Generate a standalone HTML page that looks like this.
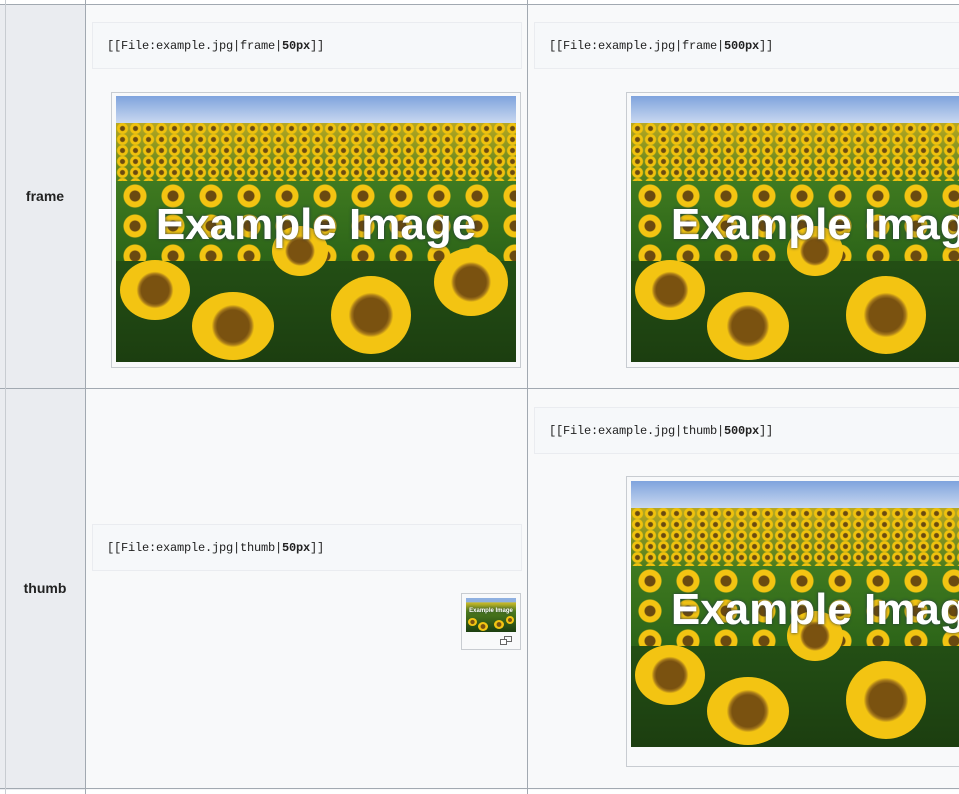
<!DOCTYPE html>
<html><head><meta charset="utf-8"><style>
body{margin:0;width:959px;height:794px;overflow:hidden;background:#fff;font-family:"Liberation Sans",sans-serif;position:relative}
.a{position:absolute}
.code{position:absolute;background:#f6f8fa;border:1px solid #eaecf0;box-sizing:border-box;font-family:"Liberation Mono","Noto Serif CJK SC",monospace;font-size:12px;color:#222;padding-left:14px;line-height:46px;letter-spacing:-0.2px}
.fr{position:absolute;background:#f8f9fa;border:1px solid #c8ccd1;box-sizing:border-box;overflow:hidden}
.img{position:absolute;overflow:hidden;background:linear-gradient(to bottom,#2f6a1c,#1c3e10)}
.sky{position:absolute;left:0;right:0;top:0;height:10%;background:linear-gradient(to bottom,#7fa3dd,#c9d8f0)}
.f1{position:absolute;left:0;right:0;top:10%;height:22%;background:
radial-gradient(circle,#6a4a10 0 2px,#f0c20e 3px 5px,transparent 6px) 0 0/13px 11px,
linear-gradient(#b8a822,#4e7d1e)}
.f2{position:absolute;left:0;right:0;top:32%;height:30%;background:
radial-gradient(circle,#6a4a10 0 5px,#f3c412 6px 11px,transparent 12px) 0 0/38px 30px,
linear-gradient(#3f7a20,#2c6418)}
.big{position:absolute;border-radius:50%;background:radial-gradient(circle,#7a5210 0 30%,#a5781a 35%,#f3c412 40% 100%)}
.img span{position:absolute;left:0;right:0;text-align:center;color:#fff;font-weight:bold;text-shadow:0 0 3px #234}
.th{font-weight:bold;font-size:14px;color:#222;text-align:center}
</style></head><body>
<div class="a" style="left:0;top:4px;width:959px;height:786px;background:#f8f9fa"></div>
<div class="a" style="left:0;top:4px;width:85px;height:786px;background:#eaecf0"></div>
<div class="a" style="left:0;top:4px;width:959px;height:1px;background:#a2a9b1"></div>
<div class="a" style="left:0;top:388px;width:959px;height:1px;background:#a2a9b1"></div>
<div class="a" style="left:0;top:788px;width:959px;height:1px;background:#a2a9b1"></div>
<div class="a" style="left:85px;top:0;width:1px;height:794px;background:#a2a9b1"></div>
<div class="a" style="left:527px;top:0;width:1px;height:794px;background:#a2a9b1"></div>
<div class="a" style="left:5px;top:0;width:1px;height:794px;background:#c8ccd1"></div>
<div class="a th" style="left:0;top:188px;width:90px">frame</div>
<div class="a th" style="left:0;top:580px;width:90px">thumb</div>

<div class="code" style="left:92px;top:22px;width:430px;height:47px">[[File:example.jpg|frame|<b>50px</b>]]</div>
<div class="code" style="left:534px;top:22px;width:440px;height:47px">[[File:example.jpg|frame|<b>500px</b>]]</div>
<div class="code" style="left:534px;top:407px;width:440px;height:47px">[[File:example.jpg|thumb|<b>500px</b>]]</div>
<div class="code" style="left:92px;top:524px;width:430px;height:47px">[[File:example.jpg|thumb|<b>50px</b>]]</div>

<div class="fr" style="left:111px;top:92px;width:410px;height:276px"></div>
<div class="img" style="left:116px;top:96px;width:400px;height:266px"><div class="sky"></div><div class="f1"></div><div class="f2"></div>
<div class="big" style="left:4px;top:164px;width:70px;height:60px"></div><div class="big" style="left:76px;top:196px;width:82px;height:68px"></div><div class="big" style="left:215px;top:180px;width:80px;height:78px"></div><div class="big" style="left:318px;top:152px;width:74px;height:68px"></div><div class="big" style="left:156px;top:130px;width:56px;height:50px"></div>
<span style="top:104px;font-size:44px">Example Image</span></div>

<div class="fr" style="left:626px;top:92px;width:340px;height:276px"></div>
<div class="img" style="left:631px;top:96px;width:400px;height:266px"><div class="sky"></div><div class="f1"></div><div class="f2"></div>
<div class="big" style="left:4px;top:164px;width:70px;height:60px"></div><div class="big" style="left:76px;top:196px;width:82px;height:68px"></div><div class="big" style="left:215px;top:180px;width:80px;height:78px"></div><div class="big" style="left:156px;top:130px;width:56px;height:50px"></div>
<span style="top:104px;font-size:44px">Example Image</span></div>

<div class="fr" style="left:626px;top:476px;width:340px;height:291px"></div>
<div class="img" style="left:631px;top:481px;width:400px;height:266px"><div class="sky"></div><div class="f1"></div><div class="f2"></div>
<div class="big" style="left:4px;top:164px;width:70px;height:60px"></div><div class="big" style="left:76px;top:196px;width:82px;height:68px"></div><div class="big" style="left:215px;top:180px;width:80px;height:78px"></div><div class="big" style="left:156px;top:130px;width:56px;height:50px"></div>
<span style="top:104px;font-size:44px">Example Image</span></div>

<div class="fr" style="left:461px;top:593px;width:60px;height:57px"></div>
<div class="img" style="left:466px;top:598px;width:50px;height:34px;background:linear-gradient(#8fb0e0 0 12%,#c9b92a 14%,#4e7d1e 40%,#1c3e10)">
<div class="big" style="left:2px;top:20px;width:9px;height:8px"></div><div class="big" style="left:12px;top:24px;width:10px;height:9px"></div><div class="big" style="left:28px;top:22px;width:10px;height:9px"></div><div class="big" style="left:40px;top:18px;width:8px;height:8px"></div>
<span style="top:10px;font-size:6px">Example Image</span></div>
<svg class="a" style="left:500px;top:636px" width="12" height="9" viewBox="0 0 12 9"><rect x="4.5" y="0.5" width="7" height="5" fill="none" stroke="#666"/><rect x="0.5" y="3.5" width="6" height="5" fill="#fff" stroke="#666"/></svg>
</body></html>
